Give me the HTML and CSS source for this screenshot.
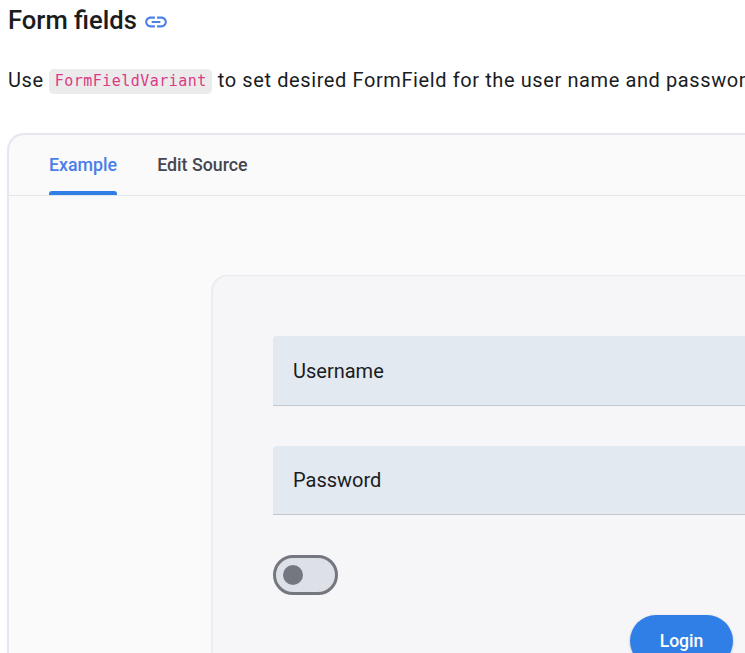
FILE: index.html
```html
<!DOCTYPE html>
<html lang="en">
<head>
<meta charset="utf-8">
<title>Form fields</title>
<link rel="stylesheet" href="styles.css">
</head>
<body>
<main class="page">
  <h2 class="heading">Form fields
    <svg class="link-icon" viewBox="0 0 24 24" width="26" height="26" aria-hidden="true"><path d="M3.9 12c0-1.71 1.39-3.1 3.1-3.1h4V7H7c-2.76 0-5 2.24-5 5s2.24 5 5 5h4v-1.9H7c-1.71 0-3.1-1.39-3.1-3.1zM8 13h8v-2H8v2zm9-6h-4v1.9h4c1.71 0 3.1 1.39 3.1 3.1s-1.39 3.1-3.1 3.1h-4V17h4c2.76 0 5-2.24 5-5s-2.24-5-5-5z"/></svg>
  </h2>
  <p class="intro">Use <code class="code">FormFieldVariant</code> to set desired FormField for the user name and password</p>
  <section class="example">
    <div class="tabs">
      <span class="tab tab-active">Example</span>
      <span class="tab">Edit Source</span>
    </div>
    <div class="preview">
      <form class="login">
        <div class="field"><span class="field-label">Username</span></div>
        <div class="field"><span class="field-label">Password</span></div>
        <div class="toggle"><span class="thumb"></span></div>
        <div class="actions"><button type="button" class="btn">Login</button></div>
      </form>
    </div>
  </section>
</main>
</body>
</html>
```
FILE: styles.css
```css
html, body { margin: 0; height: 100%; overflow: hidden; background: #fff; }
.page { width: 1000px; padding: 0 0 0 8px; font-family: Roboto, sans-serif; color: #1a1c1e; }
.heading { display: flex; align-items: center; gap: 6px; margin: 0; height: 40px; font-size: 25.6px; font-weight: 500; line-height: 40px; }
.link-icon { fill: #4c82e8; margin-top: 3px; }
.intro { margin: 18px 0 0; height: 44px; font-size: 20px; line-height: 44px; letter-spacing: 0.6px; white-space: nowrap; }
.code { display: inline-block; font-family: "DejaVu Sans Mono", monospace; font-size: 15px; line-height: 25px; padding: 0 5.5px; border-radius: 5px; background: #ebebeb; color: #dc3a86; letter-spacing: 0.47px; vertical-align: 1px; }
.example { margin-top: 32px; width: 980px; box-sizing: border-box; border: 1px solid #e4e7ef; border-radius: 16px; background: #fafafb; box-shadow: 0 0 1px 1px rgba(215, 220, 235, 0.7); }
.tabs { display: flex; gap: 40px; height: 60px; padding-left: 40px; border-bottom: 1px solid #e1e5ec; }
.tab { position: relative; display: block; height: 60px; font-size: 17.8px; font-weight: 500; line-height: 60px; color: #44474e; }
.tab-active { color: #4a7fe8; }
.tab-active::after { content: ""; position: absolute; left: 0; right: 0; bottom: 0; height: 4px; border-radius: 3px 3px 0 0; background: #2f7fe6; }
.preview { padding: 79px 0 0 203px; }
.login { width: 700px; height: 500px; box-sizing: border-box; padding: 60.4px 60px 0; border: 1px solid #ebebed; border-radius: 16px; background: #f6f6f8; box-shadow: -1px 0 1px rgba(0, 0, 0, 0.06); }
.field { display: flex; align-items: center; height: 69.5px; box-sizing: border-box; margin-bottom: 39.8px; padding-left: 20px; background: #e3e9f1; border-bottom: 1px solid #c3c7cf; border-radius: 4px 4px 0 0; font-size: 20px; }
.field-label { color: #1a1c1e; }
.toggle { display: flex; align-items: center; box-sizing: border-box; width: 65px; height: 40px; padding-left: 7px; border: 3px solid #74777f; border-radius: 20px; background: #dde0e7; }
.thumb { width: 20px; height: 20px; border-radius: 50%; background: #74777f; }
.actions { margin-top: 20px; padding-left: 357px; }
.btn { width: 103px; height: 52px; border: 0; border-radius: 26px; background: #2f7fe6; color: #fff; font: 500 17.6px Roboto, sans-serif; box-shadow: 0 1px 3px rgba(0, 0, 0, 0.2); }
```
